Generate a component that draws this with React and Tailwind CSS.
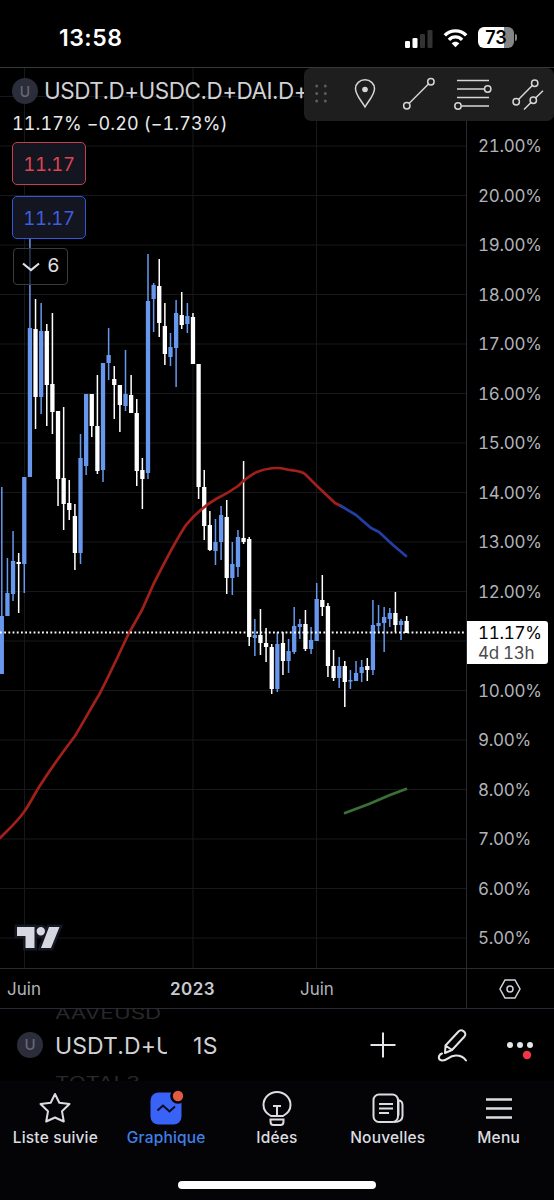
import React from 'react'
import clsx from 'clsx'

// [high, top, bottom, low, up] for every weekly candle
const candles = [
  [487, 616, 674, 674, 1], [558, 593, 616, 616, 1], [531, 561, 594, 601, 1], [553, 562, 564, 613, 0],
  [477, 477, 564, 593, 1], [238, 328, 477, 477, 1], [299, 329, 397, 429, 0], [303, 331, 397, 414, 1],
  [324, 331, 385, 426, 0], [313, 384, 412, 434, 0], [411, 411, 479, 506, 0], [407, 478, 504, 530, 0],
  [480, 503, 510, 520, 0], [504, 516, 553, 570, 0], [434, 458, 553, 564, 1], [394, 394, 466, 475, 1],
  [394, 394, 426, 437, 0], [375, 426, 471, 474, 0], [363, 363, 470, 482, 1], [328, 355, 363, 380, 1],
  [366, 379, 385, 419, 0], [385, 385, 405, 432, 0], [350, 394, 406, 411, 1], [375, 395, 413, 413, 0],
  [399, 413, 471, 486, 0], [458, 470, 479, 509, 0], [254, 301, 473, 479, 1], [283, 285, 299, 332, 1],
  [259, 286, 323, 337, 0], [303, 326, 354, 365, 0], [333, 347, 357, 366, 1], [300, 313, 348, 387, 1],
  [292, 315, 325, 329, 0], [303, 316, 324, 333, 1], [313, 317, 364, 364, 0], [364, 364, 487, 499, 0],
  [470, 487, 526, 540, 0], [511, 525, 550, 551, 0], [519, 542, 551, 565, 1], [506, 515, 542, 560, 1],
  [500, 517, 578, 594, 0], [542, 564, 578, 595, 1], [530, 537, 567, 577, 1], [461, 538, 542, 544, 0],
  [537, 539, 637, 646, 0], [619, 635, 638, 656, 1], [609, 635, 643, 655, 0], [628, 643, 647, 662, 0],
  [644, 647, 689, 694, 0], [632, 644, 689, 692, 1], [632, 643, 661, 675, 0], [639, 651, 661, 673, 1],
  [607, 626, 652, 654, 1], [619, 624, 627, 639, 1], [610, 624, 649, 651, 0], [627, 640, 649, 654, 1],
  [583, 599, 641, 641, 1], [575, 600, 607, 616, 0], [603, 606, 666, 677, 0], [650, 666, 678, 681, 0],
  [657, 666, 678, 688, 1], [661, 666, 682, 707, 0], [670, 680, 681.5, 689, 1], [661, 673, 681, 681, 1],
  [660, 667, 673, 682, 1], [658, 666, 670, 681, 0], [600, 625, 670, 675, 1], [605, 623, 626, 633, 1],
  [607, 617, 623, 652, 1], [608, 613, 619, 627, 1], [592, 613, 625, 632, 0], [619, 621, 625, 640, 1],
  [616, 621, 633, 633, 0],
]

const prices = Array.from({ length: 17 }, (_, i) => `${21 - i}.00%`)

const tabs = [
  { label: 'Liste suivie', icon: StarIcon },
  { label: 'Graphique', icon: ChartIcon, active: true },
  { label: 'Idées', icon: IdeaIcon },
  { label: 'Nouvelles', icon: NewsIcon },
  { label: 'Menu', icon: MenuIcon },
]

const App = () => {
  return (
    <div className="w-[554px] h-[1200px] flex flex-col bg-black overflow-hidden font-['Inter',sans-serif] text-[#d1d4dc]">
      <StatusBar />

      <main className="relative h-[901px] shrink-0 flex border-t border-[#363840]">
        <Chart />
        <PriceScale />
        <Legend />
        <DrawingToolbar />
      </main>

      <TimeScale />
      <SymbolBar />
      <BottomNav />
    </div>
  )
}

const StatusBar = () => (
  <header className="h-[67px] shrink-0 flex justify-between pl-[59px] pr-[37px] pt-[26px] text-white">
    <span className="text-[23px] leading-[24px] font-semibold tracking-[0.5px]">13:58</span>
    <div className="flex gap-[10px]">
      <svg className="w-[29px] h-[20px] mt-[3px]" viewBox="0 0 29 20">
        <rect x="1" y="12" width="5" height="7" rx="1.3" fill="#fff" />
        <rect x="8.5" y="9" width="5" height="10" rx="1.3" fill="#fff" />
        <rect x="16" y="5" width="5" height="14" rx="1.3" fill="#333" />
        <rect x="23.5" y="1" width="5" height="18" rx="1.3" fill="#333" />
      </svg>
      <svg className="w-[25px] h-[20px] mt-[2px]" viewBox="0 0 25 20" fill="none" stroke="#fff" strokeWidth="3.4">
        <path d="M1.8 7.4C7.6 1.3 17.4 1.3 23.2 7.4" />
        <path d="M5.9 11.8C9.6 7.9 15.4 7.9 19.1 11.8" />
        <path d="M12.5 19.3L8.6 15.3C10.8 13.2 14.2 13.2 16.4 15.3Z" fill="#fff" stroke="none" />
      </svg>
      <div className="flex items-start gap-px">
        <div className="w-[36px] h-[21px] mt-px rounded-[6px] bg-[linear-gradient(to_right,#fff_73%,#858585_73%)] text-black text-center text-[18px] leading-[21px] font-semibold">
          73
        </div>
        <div className="w-[2px] h-[7px] mt-[8px] rounded-r-full bg-[#858585]" />
      </div>
    </div>
  </header>
)

const Chart = () => (
  <svg className="w-[466px] h-[900px] shrink-0" viewBox="0 68 466 900">
    <g stroke="#17181b">
      {prices.map((p, i) => (
        <path key={p} d={`M0 ${146 + i * 49.5}H466`} />
      ))}
      <path d="M0 96.5H466M24.5 68V968M193 68V968M316.5 68V968" />
    </g>

    {candles.map(([high, top, bottom, low, up], i) => {
      const x = 1.8 + i * 5.623
      return (
        <g key={i} fill={up ? '#6798ed' : '#fff'}>
          <rect x={x - 0.75} y={high} width="1.5" height={low - high} />
          <rect x={x - 2.15} y={top} width="4.3" height={bottom - top} />
        </g>
      )
    })}

    {/* Moving averages */}
    <g fill="none" strokeWidth="2.7" strokeLinecap="round" strokeLinejoin="round">
      <path
        stroke="#a3201a"
        d="M0 838C8 830 16 823 24 812C31 802 35 793 41 784C52 767 62 753 75 736C84 721 91 708 99 695C110 674 119 654 129 633L142 610L154 583C165 562 174 543 186 525C195 514 204 506 216 499C224 495 231 491 238 486C244 480 250 475 257 472C266 468 278 467 285 469C293 471 299 470 305 474L317 486L335 503L341 506"
      />
      <path stroke="#233ea6" d="M341 506L356 515L371 528L379 532L393 545L406 556" />
      <path stroke="#3a7136" d="M345 813L369 804L390 795L406 789" />
    </g>

    <path d="M0 632.5H466" stroke="#fff" strokeWidth="1.8" strokeDasharray="1.8 2.4" />

    {/* TradingView mark */}
    <path
      d="M17 927H34.5V948H25.5V936H17ZM49 927H59.5L51 948H41ZM45 931.2A4.2 4.2 0 1 1 36.6 931.2A4.2 4.2 0 1 1 45 931.2Z"
      fill="#d6d8e1"
      stroke="#151722"
      strokeWidth="5"
      paintOrder="stroke"
    />
  </svg>
)

const PriceScale = () => (
  <aside className="relative flex-1 border-l border-[#2a2b2f] pt-[54px] text-[17px] text-[#b1b3b9] tracking-[-0.3px] tabular-nums">
    {prices.map((p) => (
      <div key={p} className="h-[49.5px] pl-[11px] flex items-center">
        {p}
      </div>
    ))}
    <div className="absolute left-0 top-[553px] w-[81px] h-[43px] pl-[11px] rounded-r-[3px] bg-white text-black leading-[20px] pt-[2px]">
      <div>11.17%</div>
      <div className="text-[#4a4a4a]">4d 13h</div>
    </div>
  </aside>
)

const Legend = () => (
  <div className="absolute left-[12px] top-[10px] w-[293px] flex flex-col items-start overflow-hidden">
    <div className="flex items-center gap-[6px] h-[26px] whitespace-nowrap">
      <span className="w-[26px] h-[26px] shrink-0 rounded-full bg-[#2b2d3a] text-[#666977] text-[14px] font-medium flex items-center justify-center">
        U
      </span>
      <span className="text-[22.5px] tracking-[-0.5px] text-[#d1d2d6]">USDT.D+USDC.D+DAI.D+</span>
    </div>
    <div className="h-[24px] mt-[8px] text-[18px] leading-[24px] tracking-[0.1px] tabular-nums text-[#e8e9eb]">
      11.17% −0.20 (−1.73%)
    </div>
    <QuoteBox className="mt-[6px] border-[#c4404a] text-[#dd4550]" />
    <QuoteBox className="mt-[11px] border-[#3457d5] text-[#3f5fdf]" />
    <div className="w-[55px] h-[37px] mt-[9px] ml-px rounded-[4px] border border-[#3a3b40] bg-black/60 flex items-center justify-center gap-[8px] text-[19px] text-[#e0e1e4]">
      <svg className="w-[18px] h-[10px]" viewBox="0 0 18 10" fill="none" stroke="currentColor" strokeWidth="2.2">
        <path d="M1 1.5L9 8L17 1.5" />
      </svg>
      6
    </div>
  </div>
)

const QuoteBox = ({ className }) => (
  <div
    className={clsx(
      'w-[74px] h-[43px] pt-[2px] rounded-[5px] border-[1.5px] bg-[#131520] flex items-center justify-center text-[18.5px] tracking-[-0.3px] tabular-nums',
      className
    )}
  >
    11.17
  </div>
)

const DrawingToolbar = () => (
  <div className="absolute left-[304px] top-0 w-[250px] h-[53px] rounded-[7px] bg-[#1e1e1e]">
    <svg className="w-[250px] h-[53px]" viewBox="304 68 250 53" fill="none" stroke="#d6d6d6" strokeWidth="1.5">
      <g fill="#5c5c5c" stroke="none">
        {[86, 93.5, 101].map((y) => (
          <React.Fragment key={y}>
            <circle cx="316.7" cy={y} r="1.5" />
            <circle cx="325.3" cy={y} r="1.5" />
          </React.Fragment>
        ))}
      </g>
      <path d="M365 107C361 100 355.5 95 355.5 88.5A9.5 8.7 0 0 1 374.5 88.5C374.5 95 369 100 365 107Z" />
      <circle cx="365" cy="89.5" r="2.8" fill="#d6d6d6" stroke="none" />
      <path d="M409 103.5L428.5 84" />
      <circle cx="406.8" cy="105.7" r="3.2" />
      <circle cx="430.9" cy="81.8" r="3.2" />
      <path d="M457 80.5H489M457 89H484.5M457 97.5H489M461.5 106H489" />
      <circle cx="487.7" cy="89" r="3.2" />
      <circle cx="458" cy="106" r="3.2" />
      <path d="M518.5 99.5L532.3 85.5M524 109.5L531 102.5M535.5 98L543 90.8" />
      <circle cx="516.2" cy="101.7" r="3.2" />
      <circle cx="534.7" cy="83.2" r="3.2" />
      <circle cx="533.3" cy="100.2" r="3.2" />
    </svg>
  </div>
)

const TimeScale = () => (
  <div className="h-[40px] shrink-0 flex border-t border-[#2a2b2f] text-[17px] text-[#b1b3b9]">
    <div className="w-[466px] flex items-center pt-[2px]">
      <span className="w-[48px] text-center">Juin</span>
      <span className="w-[252px] pl-[37px] text-center font-semibold tracking-[0.5px] text-[#c8cad0]">2023</span>
      <span>Juin</span>
    </div>
    <div className="flex-1 border-l border-[#2a2b2f] flex items-center justify-center pr-[2px]">
      <svg className="w-[22px] h-[20px]" viewBox="0 0 22 20" fill="none" stroke="#d1d4dc" strokeWidth="1.5">
        <path d="M6 1H16L21 10L16 19H6L1 10Z" />
        <circle cx="11" cy="10" r="3" />
      </svg>
    </div>
  </div>
)

const SymbolBar = () => (
  <section className="h-[73px] shrink-0 flex items-center border-t border-[#292a35] text-[#d1d2d6]">
    <span className="w-[26px] h-[26px] ml-[17px] rounded-full bg-[#2b2d3a] text-[#666977] text-[15px] font-medium flex items-center justify-center">
      U
    </span>
    {/* Symbol wheel, neighbours peek in above and below */}
    <div className="w-[112px] h-full ml-[12px] pt-[3px] flex flex-col justify-center overflow-hidden whitespace-nowrap">
      <span className="h-[24px] shrink-0 flex items-center text-[22.5px] text-[#28282a] origin-left scale-y-[0.68]">AAVEUSD</span>
      <span className="h-[42px] shrink-0 flex items-center text-[23px] tracking-[0.1px]">USDT.D+U</span>
      <span className="h-[24px] shrink-0 flex items-center text-[22.5px] text-[#28282a] origin-left scale-y-[0.68] mt-[3px] -mb-[3px]">TOTAL3</span>
    </div>
    <span className="w-[61px] pl-[26px] pt-[2px] text-[23px] tracking-[0.5px]">1S</span>
    <svg className="w-[26px] h-[26px] ml-[142px]" viewBox="0 0 26 26" stroke="#e4e5e8" strokeWidth="2">
      <path d="M13 0.5V25.5M0.5 13H25.5" />
    </svg>
    <svg className="w-[30px] h-[34px] ml-[41px]" viewBox="0 0 30 34" fill="none" stroke="#e4e5e8" strokeWidth="2" strokeLinejoin="round" strokeLinecap="round">
      <path d="M8.5 17.5L21.5 3.5C24.5 0.5 30.5 4.5 27.5 8.5L15 22L8 25ZM8.5 17.5L15 22" />
      <path d="M5 25.5C1 27 0.5 32 5 32.5C11 33 11 27.5 19 27.5C24 27.5 27 29.5 29 32.5" />
    </svg>
    <svg className="w-[28px] h-[24px] mt-[7px] ml-[39px]" viewBox="0 0 28 24">
      <g fill="#e4e5e8">
        <circle cx="4" cy="8" r="3" />
        <circle cx="14" cy="8" r="3" />
        <circle cx="24" cy="8" r="3" />
      </g>
      <circle cx="21" cy="18" r="4.2" fill="#f23645" />
    </svg>
  </section>
)

const BottomNav = () => (
  <nav className="flex-1 flex flex-col items-center bg-[#040406]">
    <div className="w-full h-[100px] grid grid-cols-5">
      {tabs.map(({ label, icon: Icon, active }) => (
        <div
          key={label}
          className={clsx('flex flex-col items-center pt-[7px] text-[15.5px] font-medium', active ? 'text-[#3f80ea]' : 'text-[#dcdde0]')}
        >
          <Icon />
          <span className="leading-[20px] tracking-[0.2px] whitespace-nowrap">{label}</span>
        </div>
      ))}
    </div>
    <div className="w-[198px] h-[8px] rounded-full bg-white" />
  </nav>
)

function TabSvg({ children }) {
  return (
    <svg className="w-[40px] h-[40px] shrink-0" viewBox="0 0 40 40" fill="none" stroke="currentColor" strokeWidth="2">
      {children}
    </svg>
  )
}

function StarIcon() {
  return (
    <TabSvg>
      <path d="M20 6L24.3 14.8L34.5 16L27 23.3L28.8 33.5L20 29.5L11.2 33.5L13 23.3L5.5 16L15.7 14.8Z" strokeLinejoin="round" />
    </TabSvg>
  )
}

function ChartIcon() {
  return (
    <TabSvg>
      <rect x="4.5" y="4.5" width="31" height="32" rx="8" fill="#3962f6" stroke="none" />
      <circle cx="32" cy="8" r="7.8" fill="#040406" stroke="none" />
      <circle cx="32" cy="8" r="5.2" fill="#e25a42" stroke="none" />
      <path d="M11.5 22.5L17 17.5L23.5 23.5L29 18.5" stroke="#080a18" />
    </TabSvg>
  )
}

function IdeaIcon() {
  return (
    <TabSvg>
      <path d="M14 28C9.5 25.5 6.5 22 6.5 17A13.5 13 0 0 1 33.5 17C33.5 22 30.5 25.5 26 28Z" />
      <path d="M16 18H24M20 18V28M13.5 31.5H26.5V33.5C26.5 36 25.5 37 23.5 37H16.5C14.5 37 13.5 36 13.5 33.5Z" />
    </TabSvg>
  )
}

function NewsIcon() {
  return (
    <TabSvg>
      <rect x="5.5" y="6.5" width="24.5" height="27.5" rx="5.5" />
      <path d="M11 16H25M11 20.5H25M11 25H21M30 12C33 12.5 34.5 14.5 34.5 17V28C34.5 32 31.5 34 26 34M30.5 12V27.5" />
    </TabSvg>
  )
}

function MenuIcon() {
  return (
    <TabSvg>
      <path d="M7 11.5H33M7 20.5H33M7 29.5H33" strokeWidth="2.5" />
    </TabSvg>
  )
}

export default App
